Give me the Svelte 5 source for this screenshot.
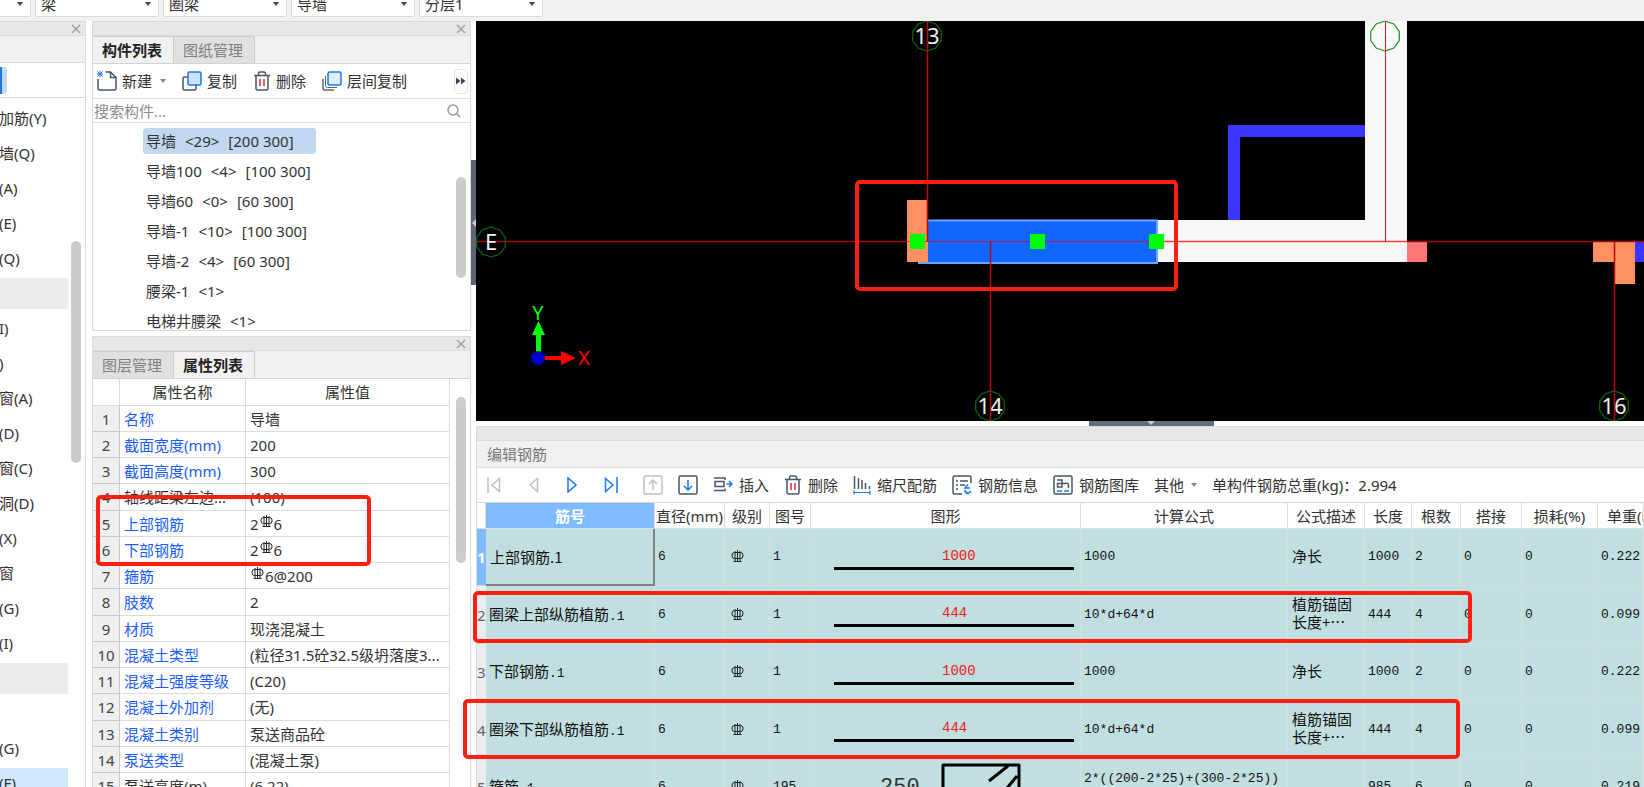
<script>
  const combos = ['梁', '圈梁', '导墙', '分层1'];

  const modules = [
    { t: '加筋(Y)' }, { t: '墙(Q)' }, { t: '(A)' }, { t: '(E)' }, { t: '(Q)' },
    { t: '', kind: 'group' }, { t: 'I)' }, { t: ')' }, { t: '窗(A)' }, { t: '(D)' },
    { t: '窗(C)' }, { t: '洞(D)' }, { t: '(X)' }, { t: '窗' }, { t: '(G)' }, { t: '(I)' },
    { t: '', kind: 'group' }, { t: '' }, { t: '(G)' }, { t: '(F)', kind: 'active' }
  ];

  const components = [
    ['导墙', '<29>', '[200 300]'], ['导墙100', '<4>', '[100 300]'], ['导墙60', '<0>', '[60 300]'],
    ['导墙-1', '<10>', '[100 300]'], ['导墙-2', '<4>', '[60 300]'], ['腰梁-1', '<1>'], ['电梯井腰梁', '<1>']
  ];

  // '#' stands for the rebar grade symbol
  const properties = [
    ['名称', '导墙'], ['截面宽度(mm)', '200'], ['截面高度(mm)', '300'],
    ['轴线距梁左边...', '(100)', true], ['上部钢筋', '2#6'], ['下部钢筋', '2#6'],
    ['箍筋', '#6@200'], ['肢数', '2'], ['材质', '现浇混凝土'],
    ['混凝土类型', '(粒径31.5砼32.5级坍落度3...'], ['混凝土强度等级', '(C20)'],
    ['混凝土外加剂', '(无)'], ['混凝土类别', '泵送商品砼'], ['泵送类型', '(混凝土泵)'],
    ['泵送高度(m)', '(6.22)', true]
  ];

  const columns = [
    ['', 9], ['筋号', 169], ['直径(mm)', 70], ['级别', 45], ['图号', 41], ['图形', 270],
    ['计算公式', 207], ['公式描述', 77], ['长度', 47], ['根数', 49], ['搭接', 61],
    ['损耗(%)', 76], ['单重(kg)', 0]
  ];

  const bars = [
    { name: '上部钢筋', fig: '1', size: '1000', formula: ['1000'], desc: ['净长'], len: '1000', count: '2', weight: '0.222' },
    { name: '圈梁上部纵筋植筋', fig: '1', size: '444', formula: ['10*d+64*d'], desc: ['植筋锚固', '长度+…'], len: '444', count: '4', weight: '0.099' },
    { name: '下部钢筋', fig: '1', size: '1000', formula: ['1000'], desc: ['净长'], len: '1000', count: '2', weight: '0.222' },
    { name: '圈梁下部纵筋植筋', fig: '1', size: '444', formula: ['10*d+64*d'], desc: ['植筋锚固', '长度+…'], len: '444', count: '4', weight: '0.099' },
    { name: '箍筋', fig: '195', size: '', formula: ['2*((200-2*25)+(300-2*25))', '+2*(75+1.9*d)'], desc: [], len: '985', count: '6', weight: '0.219' }
  ];

  const axes = [
    { x: 451, y: 15, y1: 0, y2: 221, t: '13' },
    { x: 909, y: 15, y1: 0, y2: 221, t: '15', bright: true },
    { x: 514, y: 385, y1: 221, y2: 400, t: '14' },
    { x: 1138, y: 385, y1: 221, y2: 400, t: '16' }
  ];

  function ring(cx, cy) {
    return Array.from({ length: 10 }, (_, i) => {
      const a = (i * Math.PI) / 5 + Math.PI / 2;
      return `${(cx + 15 * Math.cos(a)).toFixed(1)},${(cy + 15 * Math.sin(a)).toFixed(1)}`;
    }).join(' ');
  }
</script>

{#snippet grade()}
  <svg class="grade" width="13" height="13" viewBox="0 0 13 13" role="img" aria-label="三级钢">
    <rect x="1" y="2.500" width="11" height="6" rx="2.500" />
    <path d="M6.500 0v12M4 1v10.500M9 1v10.500M2.500 11.500h8" />
  </svg>
{/snippet}

{#snippet close()}
  <button class="close" aria-label="关闭">
    <svg width="10" height="10" viewBox="0 0 10 10"><path d="M1 1l8 8M9 1l-8 8" fill="none" stroke="#a0a0a0" stroke-width="1.500" /></svg>
  </button>
{/snippet}

{#snippet trash()}
  <svg width="18" height="20" viewBox="0 0 18 20" fill="none" stroke="#4a5568" stroke-width="1.500">
    <path d="M1 4.500h16M5.500 4.500V2.500a1.500 1.500 0 0 1 1.500-1.500h4a1.500 1.500 0 0 1 1.500 1.500v2M3 4.500v13a1.500 1.500 0 0 0 1.500 1.500h9a1.500 1.500 0 0 0 1.500-1.500v-13" />
    <path d="M7 8v7M11 8v7" stroke="#e5252b" />
  </svg>
{/snippet}

<div class="app">
  <header class="topbar">
    <select class="stub" aria-label="楼层"><option></option></select>
    {#each combos as c}
      <select aria-label={c}><option>{c}</option></select>
    {/each}
  </header>

  <div class="body">
    <nav class="panel modules">
      <div class="strip">{@render close()}</div>
      <div class="mod-tabs"></div>
      <div class="mod-tools"><span class="mod-toggle"></span></div>
      <ul>
        {#each modules as m}
          <li class={m.kind}>{m.t}</li>
        {/each}
      </ul>
      <span class="thumb mod-thumb"></span>
    </nav>

    <div class="side">
      <section class="panel">
        <div class="strip">{@render close()}</div>
        <div class="tabs">
          <button class="tab on">构件列表</button><button class="tab">图纸管理</button>
        </div>
        <div class="tools">
          <button>
            <svg width="20" height="20" viewBox="0 0 20 20" fill="none" stroke="#4a5568" stroke-width="1.500">
              <path d="M1 8v9.500a1.500 1.500 0 0 0 1.500 1.500h15a1.500 1.500 0 0 0 1.500-1.500V6.500L13.500 1H8.500M13.500 1v5.500H19" />
              <path d="M0.500 0.500l5 5M5.500 0.500l-5 5M3 0v6M0 3h6" stroke="#1a78f0" stroke-width="1" />
            </svg>
            新建<i class="caret"></i>
          </button>
          <button>
            <svg width="20" height="20" viewBox="0 0 20 20" fill="none" stroke-width="1.500">
              <rect x="1" y="6" width="13" height="13" rx="1.500" stroke="#4a5568" />
              <rect x="6" y="1" width="13" height="13" rx="1.500" stroke="#1a78f0" fill="#cfe2fa" />
            </svg>
            复制
          </button>
          <button>{@render trash()}删除</button>
          <button>
            <svg width="20" height="20" viewBox="0 0 20 20" fill="none" stroke-width="1.500">
              <path d="M1 8v9.500a1.500 1.500 0 0 0 1.500 1.500H12" stroke="#5a6474" />
              <path d="M3.500 5v9.500a2 2 0 0 0 2 2H15" stroke="#5a6474" stroke-width="1" />
              <rect x="6" y="1" width="13" height="13" rx="1.500" stroke="#1a78f0" fill="#e0edfb" />
            </svg>
            层间复制
          </button>
          <button class="more" aria-label="更多">
            <svg width="10" height="8" viewBox="0 0 10 8"><path d="M0 0.500L4.500 4 0 7.500zM5 0.500L9.500 4 5 7.500z" fill="#3c4658" /></svg>
          </button>
        </div>
        <div class="search">
          <input type="text" aria-label="搜索构件" placeholder="搜索构件..." />
          <svg width="14" height="14" viewBox="0 0 14 14" fill="none" stroke="#9a9a9a" stroke-width="1.500"><circle cx="6" cy="6" r="5" /><path d="M9.500 9.500l3.500 3.500" /></svg>
        </div>
        <ul class="comp">
          {#each components as parts, i}
            <li><button class:sel={i === 0}>{#each parts as p}<span>{p}</span>{/each}</button></li>
          {/each}
        </ul>
        <span class="thumb comp-thumb"></span>
      </section>

      <section class="panel props">
        <div class="strip">{@render close()}</div>
        <div class="tabs">
          <button class="tab">图层管理</button><button class="tab on">属性列表</button>
        </div>
        <table class="ptable">
          <colgroup><col class="c1" /><col class="c2" /><col /></colgroup>
          <thead><tr><th></th><th>属性名称</th><th>属性值</th></tr></thead>
          <tbody>
            {#each properties as [name, value, plain], i}
              <tr>
                <th scope="row">{i + 1}</th>
                <td class:link={!plain}>{name}</td>
                <td>{#each value.split('#') as part, k}{#if k > 0}<span class="sup">{@render grade()}</span>{/if}{part}{/each}</td>
              </tr>
            {/each}
          </tbody>
        </table>
        <span class="thumb prop-thumb"></span>
      </section>
    </div>

    <div class="vsplit">
      <button aria-label="收起左侧"><svg width="5" height="8" viewBox="0 0 5 8"><path d="M5 0L1 4l4 4z" fill="#c9ced4" /></svg></button>
    </div>

    <main>
      <svg class="canvas" role="img" aria-label="绘图区">
        <rect x="431" y="179" width="21" height="62" fill="#ff9060" />
        <rect x="681" y="199" width="250" height="42" fill="#f7f7f7" />
        <rect x="889" y="0" width="42" height="241" fill="#f7f7f7" />
        <path d="M752 199v-95h137v12h-125v83z" fill="#3836ff" />
        <rect x="931" y="221" width="20" height="20" fill="#ff7777" />
        <rect x="1117" y="221" width="22" height="20" fill="#ff9060" />
        <rect x="1139" y="221" width="20" height="42" fill="#ff9060" />
        <rect x="1159" y="221" width="400" height="20" fill="#3836ff" />
        <path d="M452 199h230v43H442v-1h10z" fill="#1166ff" />
        <path d="M452 199.500h229v42.500H442" fill="none" stroke="#6aa4ff" stroke-width="2" />
        <line x1="0" y1="220.500" x2="431" y2="220.500" stroke="#a00808" stroke-width="1.500" />
        <line x1="431" y1="220.500" x2="452" y2="220.500" stroke="#ff4030" />
        <line x1="452" y1="220.500" x2="681" y2="220.500" stroke="#b01a60" />
        <line x1="681" y1="220.500" x2="931" y2="220.500" stroke="#ff3a3a" stroke-width="1.500" />
        <line x1="931" y1="220.500" x2="100%" y2="220.500" stroke="#a00808" stroke-width="1.500" />
        {#each axes as a}
          <polygon points={ring(a.x, a.y)} fill="none" stroke={a.bright ? '#1f8f1f' : '#0a6a0a'} stroke-width="1.200" />
          <text x={a.x} y={a.y + 8} class="label" fill={a.bright ? '#ffffff' : '#eeeeee'}>{a.t}</text>
          <line x1={a.x + 0.5} x2={a.x + 0.5} y1={a.y1} y2={a.y2} stroke={a.bright ? '#f01010' : '#b80808'} stroke-width={a.bright ? 1 : 1.5} />
        {/each}
        <polygon points={ring(15, 221)} fill="none" stroke="#0a6a0a" stroke-width="1.200" />
        <text x="15" y="229" class="label" fill="#eeeeee">E</text>
        <g fill="#00ff00">
          <rect x="434" y="213" width="15" height="15" />
          <rect x="554" y="213" width="15" height="15" />
          <rect x="673" y="213" width="15" height="15" />
          <path d="M60 331v-17h-4l6.500-14 6.500 14h-4v17z" />
        </g>
        <path d="M69 335h16v-5l15 7-15 7v-5H69z" fill="#ff0000" />
        <circle cx="62" cy="337" r="7" fill="#0000c8" />
        <text x="62" y="299" class="axis" fill="#00ff00">Y</text>
        <text x="108" y="344" class="axis" fill="#ff0000">X</text>
      </svg>

      <div class="hsplit">
        <button aria-label="收起下方"><svg width="10" height="4" viewBox="0 0 10 4"><path d="M1 0h8L5 4z" fill="#c9ced4" /></svg></button>
      </div>

      <section class="rebar">
        <div class="strip"></div>
        <h2>编辑钢筋</h2>
        <div class="rtools">
          <button class="nav" aria-label="首条"><svg width="14" height="16" viewBox="0 0 14 16"><path d="M1 0v16M12.500 1.500v13L5 8z" fill="none" stroke="#bcbfc4" stroke-width="1.500" /></svg></button>
          <button class="nav" aria-label="上一条"><svg width="14" height="16" viewBox="0 0 14 16"><path d="M11.500 1.500v13L4 8z" fill="none" stroke="#bcbfc4" stroke-width="1.500" /></svg></button>
          <button class="nav" aria-label="下一条"><svg width="14" height="16" viewBox="0 0 14 16"><path d="M3 1v14l8-7z" fill="none" stroke="#1a78f0" stroke-width="1.500" /></svg></button>
          <button class="nav" aria-label="末条"><svg width="14" height="16" viewBox="0 0 14 16"><path d="M13 0v16M1.500 1.500v13L9 8z" fill="none" stroke="#1a78f0" stroke-width="1.500" /></svg></button>
          <button class="box" aria-label="上移"><svg width="20" height="20" viewBox="0 0 20 20" fill="none" stroke="#bcbfc4" stroke-width="1.500"><rect x="1" y="1" width="18" height="18" rx="1.500" /><path d="M10 15V5M6 9l4-4 4 4" /></svg></button>
          <button class="box" aria-label="下移"><svg width="20" height="20" viewBox="0 0 20 20" fill="none" stroke-width="1.500"><rect x="1" y="1" width="18" height="18" rx="1.500" stroke="#4a5568" /><path d="M10 5v10M6 11l4 4 4-4" stroke="#1a78f0" /></svg></button>
          <button>
            <svg width="20" height="20" viewBox="0 0 20 20" fill="none" stroke="#4a5568" stroke-width="1.500"><path d="M1 3h11v2M1 15.500h11v-2M2 6.500h9v5H2z" /><path d="M13.500 9h5.500M16 6l3 3-3 3" stroke="#1a78f0" /></svg>
            插入
          </button>
          <button>{@render trash()}删除</button>
          <button>
            <svg width="18" height="20" viewBox="0 0 18 20" fill="none" stroke="#4a5568" stroke-width="1.500"><path d="M1.500 1v13M5.500 3v11M9 5v9M12.500 8v6M16.500 11v3" /><path d="M1 17.500h16M1 15.500v4M17 15.500v4" stroke="#1a78f0" stroke-width="1.200" /></svg>
            缩尺配筋
          </button>
          <button>
            <svg width="20" height="20" viewBox="0 0 20 20" fill="none" stroke="#4a5568" stroke-width="1.500"><path d="M10 19H2.500A1.500 1.500 0 0 1 1 17.500v-15A1.500 1.500 0 0 1 2.500 1h15A1.500 1.500 0 0 1 19 2.500V8M4 6h2M8 6h8M4 10h2M8 10h5M4 14h2" /><path d="M16 9.500l-3 3.500h5M12.500 15a3.500 3.500 0 0 0 6.500 1M14 18.500h3" stroke="#1a78f0" /></svg>
            钢筋信息
          </button>
          <button>
            <svg width="20" height="20" viewBox="0 0 20 20" fill="none" stroke="#4a5568" stroke-width="1.500"><rect x="1" y="1" width="18" height="18" rx="1.500" /><path d="M4 5h5v7H4.500V8.500H13M12.500 8.500a2 2 0 0 1 3 1.500v3" /><path d="M4 16h5M11 16h5" stroke="#1a78f0" /></svg>
            钢筋图库
          </button>
          <button class="other">其他<i class="caret"></i></button>
          <span class="total">单构件钢筋总重(kg)：2.994</span>
        </div>
        <table class="rtable">
          <colgroup>
            {#each columns as [, w]}<col style:width={w ? `${w}px` : 'auto'} />{/each}
          </colgroup>
          <thead>
            <tr>{#each columns as [t], i}<th class:active={i === 1}>{t}</th>{/each}</tr>
          </thead>
          <tbody>
            {#each bars as b, i}
              <tr>
                <th scope="row" class:active={i === 0}>{i + 1}</th>
                <td class="name" class:focus={i === 0}>{b.name}<span>.1</span></td>
                <td>6</td>
                <td class="mid">{@render grade()}</td>
                <td>{b.fig}</td>
                <td class="shape">
                  {#if b.size}
                    <div class="line">{b.size}</div>
                  {:else}
                    <svg width="250" height="52" viewBox="0 0 250 52">
                      <text x="60" y="32" class="dim">250</text>
                      <path d="M123 60V4h76v56M169 20l19-15M183 32l14-17" fill="none" stroke="#000" stroke-width="3" stroke-linejoin="round" />
                    </svg>
                  {/if}
                </td>
                <td>{#each b.formula as f}<div>{f}</div>{/each}</td>
                <td class="desc">{#each b.desc as d}<div>{d}</div>{/each}</td>
                <td>{b.len}</td>
                <td>{b.count}</td>
                <td>0</td>
                <td>0</td>
                <td>{b.weight}</td>
              </tr>
            {/each}
          </tbody>
        </table>
      </section>
    </main>
  </div>

  <span class="mark beam"></span>
  <span class="mark fields"></span>
  <span class="mark row2"></span>
  <span class="mark row4"></span>
</div>

<style>
  :global(body) { margin: 0; overflow: hidden; }
  * { box-sizing: border-box; }
  .app {
    position: relative;
    height: 100vh;
    overflow: hidden;
    display: flex;
    flex-direction: column;
    background: #fff;
    color: #333;
    font: 15px/20px "Noto Sans", "Noto Sans CJK SC", sans-serif;
  }
  button { font: inherit; color: inherit; background: none; border: 0; padding: 0; margin: 0; }
  ul { list-style: none; margin: 0; padding: 0; }
  svg { display: block; flex: none; }

  .topbar { flex: none; height: 21px; background: #f1f1f1; display: flex; align-items: flex-end; gap: 4px; padding-bottom: 4px; overflow: hidden; }
  .topbar select {
    appearance: none;
    width: 124px;
    height: 27px;
    flex: none;
    margin: 0;
    padding: 0 5px;
    border: 1px solid #dadada;
    border-radius: 3px;
    font: inherit;
    color: #333;
    background: #fff url("data:image/svg+xml,%3Csvg xmlns='http://www.w3.org/2000/svg' width='6' height='4'%3E%3Cpath d='M0 0h6L3 4z' fill='%233c4658'/%3E%3C/svg%3E") no-repeat right 7px center;
  }
  .topbar .stub { width: 31px; border-left: 0; border-radius: 0 3px 3px 0; }

  .body { flex: 1; min-height: 0; display: flex; }
  .panel { position: relative; border: 1px solid #dadada; border-top: 0; background: #fff; overflow: hidden; }
  .strip { height: 15px; background: #e7e7e7; border-top: 1px solid #dadada; border-bottom: 1px solid #dcdcdc; display: flex; justify-content: flex-end; align-items: center; padding-right: 4px; }
  .close { display: block; }

  .modules { width: 86px; flex: none; border-left: 0; border-bottom: 0; }
  .mod-tabs { height: 27px; background: #f1f1f1; border-bottom: 1px solid #dadada; }
  .mod-tools { height: 35px; border-bottom: 1px solid #dadada; display: flex; align-items: center; }
  .mod-toggle { width: 7px; height: 27px; background: #c2d9f1; border-radius: 0 3px 3px 0; border-left: 2px solid #1a78f0; }
  .modules ul { padding-top: 5px; }
  .modules li { height: 31px; line-height: 31px; margin-bottom: 4px; width: 68px; text-indent: -1px; white-space: nowrap; }
  .group { background: #ececec; }
  .active { background: #d2e6fd; }
  .thumb { position: absolute; width: 10px; border-radius: 5px; background: #cbcbcb; }
  .mod-thumb { right: 4px; top: 220px; height: 222px; }

  .side { width: 379px; flex: none; margin-left: 6px; display: flex; flex-direction: column; gap: 5px; }
  .tabs { height: 28px; display: flex; background: #f1f1f1; border-bottom: 1px solid #d0d4d8; }
  .tab { width: 81px; padding-right: 2px; border: 1px solid #c8cdd1; border-left-width: 0; border-bottom: 0; background: #e0e0e0; color: #808080; }
  .tab.on { background: #f1f1f1; color: #222; font-weight: 700; }
  .tools { height: 35px; display: flex; align-items: center; gap: 16px; padding: 0 2px 0 4px; border-bottom: 1px solid #dedede; }
  .tools button { display: flex; align-items: center; gap: 5px; white-space: nowrap; }
  .caret { border: 3px solid transparent; border-top: 4px solid #888; border-bottom: 0; margin-left: 3px; }
  .tools .more { margin-left: auto; width: 14px; height: 25px; justify-content: center; border: 1px solid #e4e4e4; border-radius: 4px; }
  .search { height: 24px; display: flex; align-items: center; padding: 0 9px 0 1px; border-bottom: 1px solid #dedede; }
  .search input { flex: 1; min-width: 0; border: 0; outline: 0; padding: 0; font: inherit; color: #333; }
  .search input::placeholder { color: #8c8c8c; opacity: 1; }
  .comp { height: 207px; padding: 3px 0 0 50px; overflow: hidden; }
  .comp li { height: 30px; display: flex; align-items: center; }
  .comp button { display: flex; gap: 9px; height: 26px; line-height: 26px; padding: 0 22px 0 3px; border-radius: 3px; white-space: nowrap; }
  .comp .sel { background: #c1d8f0; }
  .comp-thumb { right: 4px; top: 156px; height: 101px; }

  .props { flex: 1; min-height: 0; border-bottom: 0; }
  table { border-collapse: separate; border-spacing: 0; table-layout: fixed; }
  th, td { padding: 0; font-weight: 400; white-space: nowrap; overflow: hidden; }
  .ptable { width: 357px; }
  .c1 { width: 27px; }
  .c2 { width: 126px; }
  .ptable tr { height: 26px; }
  .ptable thead tr, .ptable tbody tr:nth-child(4n) { height: 27px; }
  .ptable th, .ptable td { border-right: 1px solid #dcdcdc; border-bottom: 1px solid #dcdcdc; }
  .ptable tbody th { background: #efefef; border-color: #c8c8c8; color: #444; }
  .ptable td { padding-left: 4px; }
  .ptable .link { color: #1a5cff; }
  .grade { display: inline-block; fill: none; stroke: #222; stroke-width: 1; }
  .sup { display: inline-block; vertical-align: 2px; line-height: 0; margin: 0 1px; }
  .prop-thumb { right: 4px; top: 61px; height: 166px; }

  .vsplit { width: 5px; flex: none; }
  .vsplit button { margin-top: 139px; width: 5px; height: 125px; background: #5b6672; display: flex; align-items: center; justify-content: center; }

  main { flex: 1; min-width: 0; display: flex; flex-direction: column; }
  .canvas { width: 100%; height: 400px; background: #000; }
  .label { font: 22px "Noto Sans", sans-serif; text-anchor: middle; }
  .axis { font: 20px "Noto Sans", sans-serif; text-anchor: middle; }
  .hsplit { height: 5px; flex: none; display: flex; justify-content: center; }
  .hsplit button { width: 125px; background: #646d78; display: flex; justify-content: center; margin-left: 182px; }

  .rebar { flex: 1; min-height: 0; border-left: 1px solid #dadada; overflow: hidden; }
  h2 { margin: 0; height: 27px; padding-left: 10px; font: inherit; line-height: 26px; color: #777; background: #f1f1f1; border-bottom: 1px solid #dedede; }
  .rtools { height: 35px; display: flex; align-items: center; gap: 15px; padding-left: 10px; border-bottom: 1px solid #dadada; white-space: nowrap; }
  .rtools button { display: flex; align-items: center; gap: 6px; flex: none; }
  .rtools .nav { margin-right: 10px; }
  .rtools .other { gap: 4px; }
  .rtable { width: 100%; }
  .rtable thead tr { height: 26px; }
  .rtable thead th { border-right: 1px solid #dedede; border-bottom: 1px solid #dedede; }
  .rtable thead th:last-child { text-align: left; padding-left: 9px; }
  .rtable .active { background: #80bbff; color: #fff; font-weight: 700; }
  .rtable tbody tr { height: 57px; }
  .rtable tbody tr:nth-child(2n) { height: 58px; }
  .rtable tbody th { background: #ececec; color: #666; text-align: left; border-bottom: 1px solid #d5dbdc; }
  .rtable tbody th.active { background: #80bbff; color: #fff; }
  .rtable td {
    padding-left: 3px;
    background: #c1dfe1;
    color: #111;
    border-right: 1px solid #d6dddd;
    border-bottom: 1px solid #d6dddd;
    font: 13px/16px "Liberation Mono", "Noto Sans CJK SC", monospace;
  }
  .rtable .name { font: 15px/20px "Noto Sans CJK SC", sans-serif; padding-bottom: 2px; }
  .name span { font: 13px "Liberation Mono", monospace; }
  .rtable .name.focus { border-right: 2px solid #808080; border-bottom: 2px solid #808080; padding: 0 0 0 4px; }
  .name.focus span { font: inherit; }
  .rtable .mid { padding: 4px 0 0 6px; }
  .rtable .desc { font: 15px/18px "Noto Sans CJK SC", sans-serif; padding: 0 0 3px 4px; }
  .rtable .shape { padding: 0 6px 0 23px; }
  .line { border-bottom: 3px solid #000; padding-left: 108px; color: #f01818; font: 14px/22px "Liberation Mono", monospace; }
  .shape svg { margin-left: -14px; }
  .dim { font: 22px "Liberation Mono", monospace; fill: #333; }

  .mark { position: absolute; border: 4px solid #ff1f10; border-radius: 5px; pointer-events: none; }
  .beam { left: 855px; top: 180px; width: 323px; height: 111px; }
  .fields { left: 96px; top: 495px; width: 275px; height: 71px; }
  .row2 { left: 473px; top: 591px; width: 999px; height: 52px; }
  .row4 { left: 463px; top: 699px; width: 997px; height: 60px; }
</style>
